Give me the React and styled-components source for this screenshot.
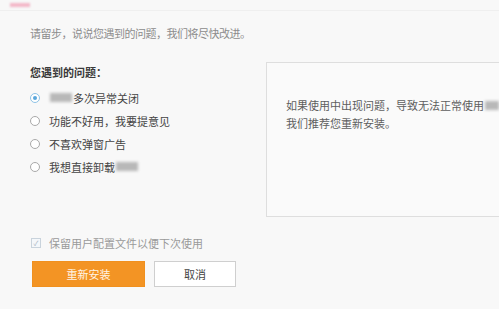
import React, { useState } from 'react';
import styled, { createGlobalStyle } from 'styled-components';

const GlobalStyle = createGlobalStyle`
  html, body { margin: 0; padding: 0; background: #f8f8f8; }
  body { font-family: "Noto Sans CJK SC", "Liberation Sans", sans-serif; overflow: hidden; }
`;

const Page = styled.div`
  width: 499px;
  height: 309px;
  background: #f8f8f8;
  overflow: hidden;
  display: flex;
  flex-direction: column;
`;

const TopBar = styled.div`
  height: 10px;
  border-bottom: 1px solid #efefef;
  padding-left: 10px;
  display: flex;
  align-items: center;
`;

const Tab = styled.span`
  width: 20px;
  height: 4px;
  background: #f3b7c8;
  filter: blur(1px);
`;

const Intro = styled.div`
  padding: 13px 0 0 30px;
  height: 18px;
  line-height: 18px;
  font-size: 11px;
  letter-spacing: -0.5px;
  color: #8c8c8c;
`;

const Main = styled.div`
  margin-top: 20px;
  display: flex;
`;

const LeftCol = styled.div`
  width: 236px;
  flex-shrink: 0;
  padding-left: 30px;
  display: flex;
  flex-direction: column;
`;

const Title = styled.div`
  height: 20px;
  line-height: 20px;
  font-size: 11px;
  font-weight: 600;
  color: #3a3a3a;
  margin-bottom: 4px;
`;

const Option = styled.label`
  height: 23px;
  display: flex;
  align-items: center;
  font-size: 11px;
  color: #444;
  cursor: pointer;
`;

const Radio = styled.span`
  width: 8px;
  height: 8px;
  border-radius: 50%;
  border: 1px solid ${p => (p.checked ? '#8fc3e6' : '#a9a9a9')};
  background: #fff;
  margin: 0 9px 0 0;
  display: flex;
  align-items: center;
  justify-content: center;
  &::after {
    content: '';
    width: 4px;
    height: 4px;
    border-radius: 50%;
    background: ${p => (p.checked ? '#5aa7dc' : 'transparent')};
  }
`;

const Blur = styled.span`
  display: inline-block;
  width: ${p => p.w}px;
  height: 9px;
  background: #b8b8b8;
  filter: blur(1.5px);
  margin: 0 1px;
`;

const InfoBox = styled.div`
  width: 260px;
  height: 155px;
  flex-shrink: 0;
  border: 1px solid #dedede;
  background: #fafafa;
  padding: 33px 0 0 19px;
  box-sizing: border-box;
  font-size: 11px;
  line-height: 18px;
  color: #5e5e5e;
  white-space: nowrap;
`;

const CheckRow = styled.label`
  margin: 18px 0 0 31px;
  height: 16px;
  display: flex;
  align-items: center;
  font-size: 11px;
  color: #9a9a9a;
`;

const Check = styled.span`
  width: 8px;
  height: 8px;
  border: 1px solid #c9d3dc;
  background: #f4f7fa;
  margin-right: 8px;
  display: flex;
  align-items: center;
  justify-content: center;
  font-size: 7px;
  line-height: 1;
  color: #a9b6c2;
`;

const Buttons = styled.div`
  margin: 10px 0 0 32px;
  display: flex;
  gap: 9px;
`;

const Button = styled.button`
  height: 26px;
  width: ${p => p.w}px;
  padding: 0;
  font-family: inherit;
  font-size: 11px;
  border-radius: 0;
  border: 1px solid ${p => (p.primary ? '#f0901f' : '#cfcfcf')};
  background: ${p => (p.primary ? '#f39424' : '#ffffff')};
  color: ${p => (p.primary ? '#fff4e6' : '#444')};
  cursor: pointer;
`;

const options = [
  { key: 'crash', label: '多次异常关闭', pre: 22 },
  { key: 'feature', label: '功能不好用，我要提意见' },
  { key: 'ads', label: '不喜欢弹窗广告' },
  { key: 'uninstall', label: '我想直接卸载', post: 22 },
];

export default function App() {
  const [picked, setPicked] = useState('crash');
  const [keep, setKeep] = useState(true);

  return (
    <Page>
      <GlobalStyle />
      <TopBar>
        <Tab />
      </TopBar>
      <Intro>请留步，说说您遇到的问题，我们将尽快改进。</Intro>

      <Main>
        <LeftCol>
          <Title>您遇到的问题：</Title>
          {options.map(o => (
            <Option key={o.key} onClick={() => setPicked(o.key)}>
              <Radio checked={picked === o.key} />
              {o.pre && <Blur w={o.pre} />}
              {o.label}
              {o.post && <Blur w={o.post} />}
            </Option>
          ))}
        </LeftCol>
        <InfoBox>
          如果使用中出现问题，导致无法正常使用<Blur w={14} />
          <br />
          我们推荐您重新安装。
        </InfoBox>
      </Main>

      <CheckRow onClick={() => setKeep(!keep)}>
        <Check>{keep ? '✓' : ''}</Check>
        保留用户配置文件以便下次使用
      </CheckRow>

      <Buttons>
        <Button primary w={113}>重新安装</Button>
        <Button w={82}>取消</Button>
      </Buttons>
    </Page>
  );
}
